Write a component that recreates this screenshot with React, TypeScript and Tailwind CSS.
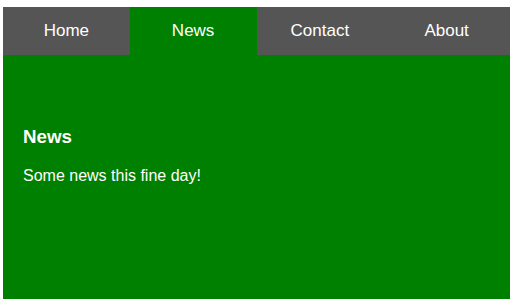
const TABS = ["Home", "News", "Contact", "About"];

export default function App() {
	const active = "News";

	return (
		<div className="h-[306px] w-[516px] bg-white pt-[7px] pl-[3px] pr-[6px] pb-[7px] font-['Liberation_Sans',Arial,sans-serif]">
			<div className="flex h-full flex-col">
				<div className="flex h-[48px]">
					{TABS.map((t) => (
						<div
							key={t}
							className={
								t === active
									? "flex flex-1 items-center justify-center bg-[#008000] text-[17px] text-white"
									: "flex flex-1 items-center justify-center bg-[#555555] text-[17px] text-white"
							}
						>
							{t}
						</div>
					))}
				</div>
				<div className="flex-1 bg-[#008000] px-[20px] pt-[52px] text-white">
					<h3 className="mt-[18.72px] mb-[19.5px] text-[18.72px] font-bold leading-[1.15]">News</h3>
					<p className="text-[16px] leading-[1.15]">Some news this fine day!</p>
				</div>
			</div>
		</div>
	);
}
